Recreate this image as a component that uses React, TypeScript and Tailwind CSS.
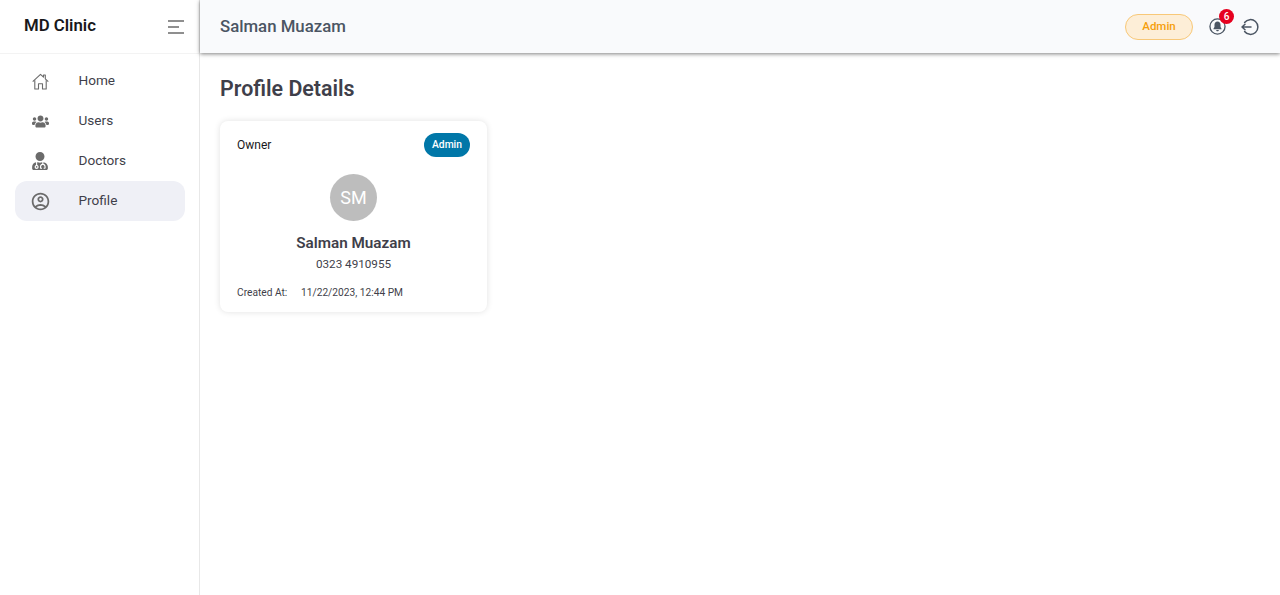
import { FaUserMd, FaUsers } from 'react-icons/fa'
import { MdOutlineAccountCircle } from 'react-icons/md'
import type { ReactNode } from 'react'

function NavItem({ icon, label, active }: { icon: ReactNode; label: string; active?: boolean }) {
  return (
    <div className={`flex h-10 items-center rounded-xl pl-[17px] text-[13.600px] text-[#3f3f4a] ${active ? 'bg-[#eff0f6]' : ''}`}>
      <div className="flex w-[46.500px] shrink-0 items-center text-[#6b6b6b]">{icon}</div>
      <span className="-mt-0.5">{label}</span>
    </div>
  )
}

function HomeIcon() {
  return (
    <svg width="17" height="17" viewBox="0 0 17 17" fill="none" stroke="#6b6b6b" strokeWidth="1.100" strokeLinejoin="round">
      <path d="M0.700 8.600 8.500 1.300l3 2.800V2h1.800v3.800l3 2.800" />
      <path d="M2.800 7.200V16h3.700v-5.300h4V16h3.700V7.200" />
    </svg>
  )
}

function BellIcon() {
  return (
    <svg width="17" height="17" viewBox="0 0 18 18" fill="none">
      <circle cx="9" cy="9" r="8" stroke="#4b5563" strokeWidth="1.400" />
      <path d="M9 3.800c-2 0-3.200 1.500-3.200 3.400v2.300L4.700 11.400v.6h8.600v-.6l-1.100-1.900V7.200C12.200 5.300 11 3.800 9 3.800z" fill="#4b5563" />
      <path d="M7.600 12.700h2.800c0 .8-.6 1.400-1.400 1.400s-1.400-.6-1.400-1.400z" fill="#4b5563" />
    </svg>
  )
}

function LogoutIcon() {
  return (
    <svg width="18" height="18" viewBox="0 0 18 18" fill="none" stroke="#4b5563" strokeWidth="1.500" strokeLinecap="round" strokeLinejoin="round">
      <path d="M3.600 4.500A7.400 7.400 0 1 1 3.600 13.500" />
      <path d="M10 9H1M1 9l3-2.800M1 9l3 2.800" />
    </svg>
  )
}

export default function App() {
  return (
    <div className="flex min-h-[595px] bg-white font-['Roboto',sans-serif]">
      <aside className="w-[200px] shrink-0 border-r border-[#e8e8e8]">
        <div className="flex h-[54px] items-center justify-between border-b border-[#f3f3f3] pl-6 pr-[15px]">
          <span className="-mt-px text-[16.800px] font-semibold text-[#18181b]">MD Clinic</span>
          <svg width="16" height="14" viewBox="0 0 16 14" stroke="#6b6b6b" strokeWidth="1.300">
            <path d="M0 1h16M0 7h11M0 13h16" />
          </svg>
        </div>
        <nav className="flex flex-col pl-[15px] pr-[14px] pt-[7px]">
          <NavItem icon={<HomeIcon />} label="Home" />
          <NavItem icon={<FaUsers size={17} />} label="Users" />
          <NavItem icon={<span className="-ml-px flex"><FaUserMd size={18} /></span>} label="Doctors" />
          <NavItem icon={<span className="-ml-0.5 flex"><MdOutlineAccountCircle size={21} /></span>} label="Profile" active />
        </nav>
      </aside>
      <div className="min-w-0 flex-1">
        <header className="flex h-[53px] items-center justify-between bg-[#f9fafc] pl-5 pr-[21px] shadow-[0_1px_4px_rgba(0,0,0,0.5)]">
          <span className="pt-px text-[16.800px] font-medium text-[#4b5563]">Salman Muazam</span>
          <div className="flex items-center">
            <span className="flex h-[26px] w-[68px] items-center justify-center rounded-full border border-[#f8c878] bg-[#fdeed7] text-[11.500px] font-medium text-[#f59e0b]">Admin</span>
            <div className="relative ml-4 flex">
              <BellIcon />
              <span className="absolute -right-[8px] -top-[9px] flex h-[15px] w-[15px] items-center justify-center rounded-full bg-[#e6001f] text-[10px] font-medium text-white">6</span>
            </div>
            <div className="ml-[15px] flex"><LogoutIcon /></div>
          </div>
        </header>
        <main className="px-5 pt-[21px]">
          <h1 className="text-[21.400px] leading-[30px] font-semibold text-[#3f3f4a]">Profile Details</h1>
          <div className="mt-[17px] w-[267px] rounded-lg bg-white px-[17px] pt-3 pb-3 shadow-[0_0_6px_rgba(0,0,0,0.12)]">
            <div className="flex items-center justify-between">
              <span className="text-xs font-normal text-[#18181b]">Owner</span>
              <span className="flex h-[24px] w-[46px] items-center justify-center rounded-full bg-[#0077a8] text-[10.300px] font-medium text-white">Admin</span>
            </div>
            <div className="mx-auto mt-[17px] flex h-[47px] w-[47px] items-center justify-center rounded-full bg-[#bdbdbd] text-lg text-white">SM</div>
            <div className="mt-[11px] text-center text-[15.250px] leading-[22px] font-semibold text-[#3f3f4a]">Salman Muazam</div>
            <div className="mt-px text-center text-[11.700px] leading-[18px] text-[#3f3f4a]">0323 4910955</div>
            <div className="mt-[13px] flex text-[10.200px] leading-[14px] text-[#3f3f4a]">
              <span className="w-[64px]">Created At:</span>
              <span>11/22/2023, 12:44 PM</span>
            </div>
          </div>
        </main>
      </div>
    </div>
  )
}
